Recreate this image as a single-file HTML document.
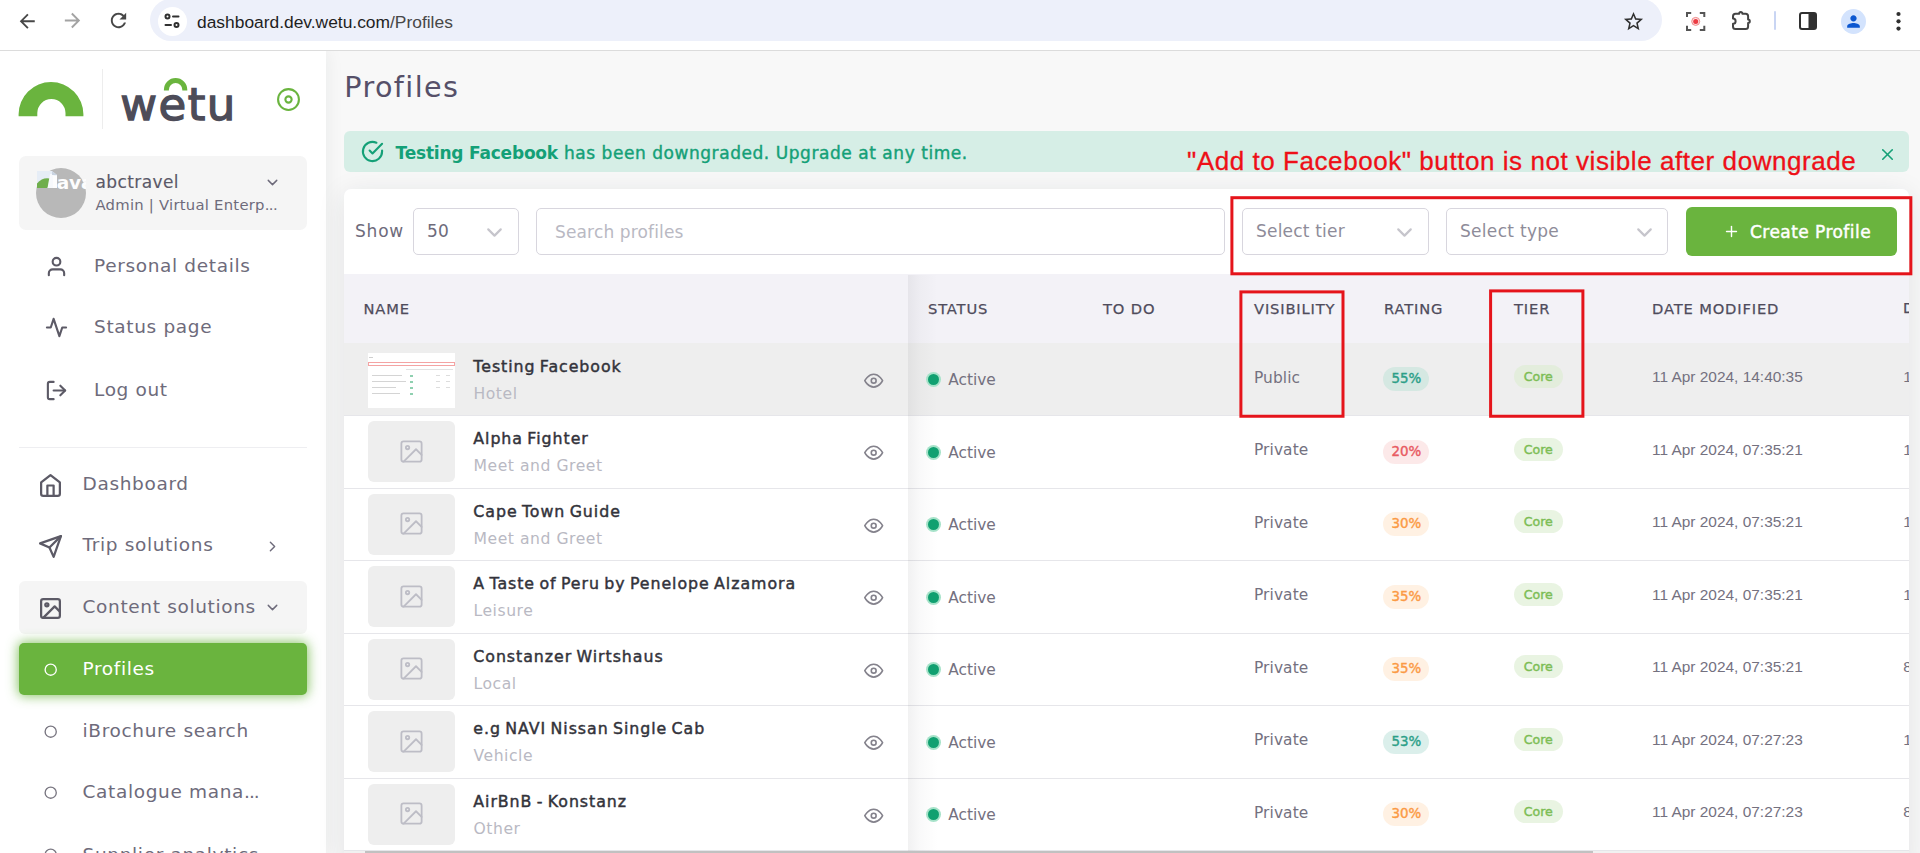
<!DOCTYPE html><html lang="en"><head><meta charset="utf-8"><title>Profiles</title><style>
*{box-sizing:border-box;margin:0;padding:0}
html,body{width:1920px;height:853px;overflow:hidden;background:#f8f8f8}
body{position:relative;font-family:"DejaVu Sans", "Liberation Sans", sans-serif;color:#6e6b7b;font-size:16px}
.a{position:absolute;white-space:nowrap}
svg{position:absolute;overflow:visible}
.fe{fill:none;stroke:currentColor;stroke-width:2;stroke-linecap:round;stroke-linejoin:round}
.t{position:absolute;white-space:nowrap;line-height:1}
/* chrome */
#chrome{left:0;top:0;width:1920px;height:51px;background:#fff;border-bottom:1px solid #dcdcdc}
#pill{left:150px;top:-1px;width:1512px;height:42px;border-radius:21px;background:#edf0fa}
#site{left:158px;top:7px;width:29px;height:29px;border-radius:50%;background:#fff}
#url{left:197px;top:12px;font-family:"Liberation Sans", "DejaVu Sans", sans-serif;font-size:17.4px;color:#1f1f1f;line-height:20px}
#url span{color:#474747}
/* sidebar */
#side{left:0;top:51px;width:326px;height:802px;background:#fff;box-shadow:0 0 18px rgba(34,41,47,.07)}
.nav{font-size:18.5px;letter-spacing:.65px;color:#6e6b7b}
.ico{color:#5c5a66}
#user{left:19px;top:156px;width:288px;height:74px;border-radius:7px;background:#f5f5f5}
#avatar{left:36px;top:168px;width:50px;height:50px;border-radius:50%;background:#b8b8b8}
#act{left:19px;top:643px;width:288px;height:52px;border-radius:5px;background:#6ab43e;box-shadow:0 0 12px 1px rgba(106,180,62,.8)}
#cs{left:19px;top:581px;width:288px;height:53px;border-radius:6px;background:#f5f5f5}
/* main */
#alert{left:344px;top:131px;width:1564.5px;height:40.5px;border-radius:6px;background:#d6eee6}
#card{left:344px;top:188.5px;width:1565px;height:680px;border-radius:7px;background:#fff;box-shadow:0 5px 28px rgba(34,41,47,.1)}
.inp{border:1px solid #d8d6de;border-radius:5px;background:#fff;height:47px;top:208px}
#thead{left:344px;top:274px;width:1565px;height:69px;background:#f3f2f7}
.th{font-size:14.7px;letter-spacing:.85px;color:#4f4c5c;font-weight:400;-webkit-text-stroke:.25px #4f4c5c}
.row{left:344px;width:1565px}
.sep{left:344px;width:1565px;height:1px;background:#e6e6ea}
.thumb{left:368px;width:87px;height:61px;border-radius:6px;background:#eeeeee;color:#b4b4be}
.nm{font-size:15.8px;font-weight:400;color:#33333b;letter-spacing:.95px;word-spacing:-1.6px;-webkit-text-stroke:.45px #33333b}
.ty{font-size:15.6px;color:#b9b9c3;letter-spacing:.55px}
.cell{font-size:15.4px;color:#74717f;letter-spacing:.1px}
.date{font-family:"Liberation Sans", "DejaVu Sans", sans-serif;font-size:15.45px;letter-spacing:0}
.dot{width:11px;height:11px;border-radius:50%;background:#10a070;box-shadow:0 0 0 2px #a6e2c9}
.bd{height:24px;border-radius:12px;font-size:13.4px;font-weight:400;line-height:24px;text-align:center;letter-spacing:-.1px;-webkit-text-stroke:.4px currentColor}
.g{background:rgba(40,160,135,.17);color:#2c9f88}
.r{background:rgba(234,84,85,.13);color:#e85a62}
.o{background:rgba(255,159,67,.15);color:#fb9a45}
.core{background:rgba(106,180,62,.15);color:#7cbd55;height:23px;line-height:23px;width:48.5px;font-size:12.6px;letter-spacing:0}
.red{border:2.5px solid #f0141e}
#anno{left:1187px;top:146px;font-family:"Liberation Sans", "DejaVu Sans", sans-serif;font-size:26px;letter-spacing:.56px;color:#ee0f17;line-height:30px;-webkit-text-stroke:.3px #ee0f17}
</style></head><body>
<div class="a" id="side"></div>
<div class="a" id="chrome"></div>
<div class="a" id="pill"></div><div class="a" id="site"></div>
<div class="a" id="url">dashboard.dev.wetu.com<span>/Profiles</span></div>
<svg style="left:16.25px;top:9.55px;width:22.5px;height:22.5px;fill:#474747" viewBox="0 0 24 24"><path d="M20 11H7.83l5.59-5.59L12 4l-8 8 8 8 1.41-1.41L7.83 13H20v-2z"/></svg>
<svg style="left:61.0px;top:9.0px;width:23px;height:23px;fill:#a3a3a3" viewBox="0 0 24 24"><path d="M12 4l-1.41 1.41L16.17 11H4v2h12.17l-5.58 5.59L12 20l8-8z"/></svg>
<svg style="left:106.5px;top:9.0px;width:23px;height:23px;fill:#474747" viewBox="0 0 24 24"><path d="M17.65 6.35C16.2 4.9 14.21 4 12 4c-4.42 0-7.99 3.58-7.99 8s3.57 8 7.99 8c3.73 0 6.84-2.55 7.73-6h-2.08c-.82 2.33-3.04 4-5.65 4-3.31 0-6-2.69-6-6s2.69-6 6-6c1.66 0 3.14.69 4.22 1.78L13 11h7V4l-2.35 2.35z"/></svg>
<svg style="left:163px;top:12px;width:18px;height:18px" viewBox="0 0 18 18" fill="none" stroke="#303030" stroke-width="2" stroke-linecap="round"><circle cx="4.5" cy="4.5" r="2"/><line x1="10" y1="4.5" x2="15.5" y2="4.5"/><circle cx="13.5" cy="13" r="2"/><line x1="2.5" y1="13" x2="8" y2="13"/></svg>
<svg style="left:1621.5px;top:10.0px;width:23px;height:23px;fill:#303030" viewBox="0 0 24 24"><path d="M22 9.24l-7.19-.62L12 2 9.19 8.63 2 9.24l5.46 4.73L5.82 21 12 17.27 18.18 21l-1.63-7.03L22 9.24zM12 15.4l-3.76 2.27 1-4.28-3.32-2.88 4.38-.38L12 6.1l1.71 4.04 4.38.38-3.32 2.88 1 4.28L12 15.4z"/></svg>
<svg style="left:1685px;top:11px;width:21px;height:21px" viewBox="0 0 21 21" fill="none" stroke="#555" stroke-width="2"><path d="M2 6V2h4.2M14.8 2H19.3v4M19.3 14.8v4.1h-4.5M6.2 18.9H2v-4.1"/><circle cx="10.7" cy="10.4" r="4" fill="#fbe3e3" stroke="#f08a8a" stroke-width="1"/><circle cx="10.7" cy="10.4" r="2.5" fill="#ec3b43" stroke="none"/></svg>
<svg style="left:1729px;top:9px;width:24px;height:24px" viewBox="0 0 24 24" fill="none" stroke="#444" stroke-width="2" stroke-linejoin="round"><path d="M4 7.2 A2.5 2.5 0 0 1 6.5 4.7 H10.2 a1.6 1.6 0 0 1 3.2 0 H16.6 A2.5 2.5 0 0 1 19.1 7.2 V10.5 a1.7 1.7 0 0 1 0 3.4 V17.5 A2.5 2.5 0 0 1 16.6 20 H6.5 A2.5 2.5 0 0 1 4 17.5 V14.8 a2.6 2.6 0 0 0 0 -5.2 Z"/></svg>
<div class="a" style="left:1774px;top:11px;width:2px;height:19px;background:#c9d5f3;border-radius:1px"></div>
<svg style="left:1799px;top:12px;width:18px;height:18px" viewBox="0 0 18 18"><rect x="1" y="1" width="16" height="16" rx="2" fill="none" stroke="#303030" stroke-width="2"/><rect x="9.5" y="1" width="7.5" height="16" fill="#303030"/></svg>
<div class="a" style="left:1841px;top:9px;width:25px;height:25px;border-radius:50%;background:#d3e3fd"></div>
<svg style="left:1844.0px;top:11.5px;width:19px;height:19px;fill:#0b57d0" viewBox="0 0 24 24"><path d="M12 12c2.21 0 4-1.79 4-4s-1.79-4-4-4-4 1.79-4 4 1.79 4 4 4zm0 2c-2.67 0-8 1.34-8 4v2h16v-2c0-2.66-5.33-4-8-4z"/></svg>
<svg style="left:1896px;top:11px;width:5px;height:21px" viewBox="0 0 5 21" fill="#303030"><circle cx="2.5" cy="3" r="2.1"/><circle cx="2.5" cy="10.3" r="2.1"/><circle cx="2.5" cy="17.6" r="2.1"/></svg>
<svg style="left:18px;top:81px;width:66px;height:36px" viewBox="0 0 66 36"><path d="M0.6 35.3 L0.6 33.3 A32.4 32.4 0 0 1 65.4 33.3 L65.4 35.3 L47.5 35.3 L47.5 32.1 A14.1 14.1 0 0 0 19.3 32.1 L19.3 35.3 Z" fill="#6ab43e"/></svg>
<div class="a" style="left:102px;top:69px;width:1px;height:60px;background:#ededed"></div>
<div class="t" id="wetu" style="left:120.2px;top:78.5px;font-size:45px;font-weight:400;color:#4d4c59;line-height:52px;letter-spacing:1.5px;-webkit-text-stroke:1.35px #4d4c59">wetu</div>
<svg style="left:163px;top:77px;width:26px;height:14px" viewBox="0 0 26 14"><path d="M3.4 13.5 L3.4 12.7 A9.2 9.2 0 0 1 21.8 12.7 L21.8 13.5" fill="none" stroke="#6ab43e" stroke-width="5"/></svg>
<svg class="fe" style="left:276.0px;top:87.2px;width:25px;height:25px;color:#6ab43e;stroke-width:2;" viewBox="0 0 24 24" ><circle cx="12" cy="12" r="10"/><circle cx="12" cy="12" r="3"/></svg>
<div class="a" id="user"></div>
<div class="a" id="avatar"></div><svg style="left:36.6px;top:171px;width:20px;height:17px" viewBox="0 0 20 17"><path d="M0 0 H15 L20 4 V17 H0Z" fill="#e6edf6"/><path d="M0 17 V12.5 Q6 5.5 14.5 8 L10.5 17Z" fill="#6fae4c"/><path d="M13 3 h3.5 v14 h-6Z" fill="#f7f9fc"/><path d="M15 0 L20 4 H15Z" fill="#c9d3e0"/><path d="M16 4.5 V17 H20 V4.5Z" fill="#fdfdfd"/></svg><div class="a" style="left:56.8px;top:168px;width:29.4px;height:26px;overflow:hidden"><div class="t" style="left:0;top:4.5px;font-size:18.5px;font-weight:700;color:#fdfdfd;line-height:20px;letter-spacing:-.2px;font-family:"Liberation Sans", "DejaVu Sans", sans-serif">avatar</div></div>
<div class="t " style="left:95.5px;top:170.0px;height:24px;line-height:24px;font-size:17px;letter-spacing:.4px;color:#5b5968;font-weight:400;-webkit-text-stroke:.15px #5b5968">abctravel</div>
<div class="t " style="left:95.5px;top:192.5px;height:24px;line-height:24px;font-size:14.8px;letter-spacing:.25px;color:#6e6b7b">Admin | Virtual Enterp<span style='letter-spacing:-.6px'>...</span></div>
<svg class="fe" style="left:264.0px;top:174.0px;width:17px;height:17px;color:#6e6b7b;" viewBox="0 0 24 24" ><polyline points="6 9 12 15 18 9"/></svg>
<svg class="fe" style="left:45.1px;top:255.0px;width:23px;height:23px;color:#5c5a66;stroke-width:2.2;" viewBox="0 0 24 24" ><path d="M20 21v-2a4 4 0 0 0-4-4H8a4 4 0 0 0-4 4v2"/><circle cx="12" cy="7" r="4"/></svg>
<div class="t nav" style="left:94px;top:254.1px;height:24px;line-height:24px;">Personal details</div>
<svg class="fe" style="left:45.1px;top:316.3px;width:23px;height:23px;color:#5c5a66;stroke-width:2.2;" viewBox="0 0 24 24" ><polyline points="22 12 18 12 15 21 9 3 6 12 2 12"/></svg>
<div class="t nav" style="left:94px;top:315.4px;height:24px;line-height:24px;">Status page</div>
<svg class="fe" style="left:45.1px;top:378.5px;width:23px;height:23px;color:#5c5a66;stroke-width:2.2;" viewBox="0 0 24 24" ><path d="M9 21H5a2 2 0 0 1-2-2V5a2 2 0 0 1 2-2h4"/><polyline points="16 17 21 12 16 7"/><line x1="21" y1="12" x2="9" y2="12"/></svg>
<div class="t nav" style="left:94px;top:377.6px;height:24px;line-height:24px;">Log out</div>
<div class="a" style="left:19px;top:447px;width:288px;height:1px;background:#eeeef1"></div>
<div class="a" id="cs"></div>
<svg class="fe" style="left:38.0px;top:472.9px;width:25px;height:25px;color:#5c5a66;stroke-width:2.15;" viewBox="0 0 24 24" ><path d="M3 9l9-7 9 7v11a2 2 0 0 1-2 2H5a2 2 0 0 1-2-2z"/><polyline points="9 22 9 12 15 12 15 22"/></svg>
<div class="t nav" style="left:82.5px;top:472.1px;height:24px;line-height:24px;">Dashboard</div>
<svg class="fe" style="left:38.0px;top:533.5px;width:25px;height:25px;color:#5c5a66;stroke-width:2.15;" viewBox="0 0 24 24" ><line x1="22" y1="2" x2="11" y2="13"/><polygon points="22 2 15 22 11 13 2 9 22 2"/></svg>
<div class="t nav" style="left:82.5px;top:532.7px;height:24px;line-height:24px;">Trip solutions</div>
<svg class="fe" style="left:38.0px;top:596.1px;width:25px;height:25px;color:#5c5a66;stroke-width:2.15;" viewBox="0 0 24 24" ><rect x="3" y="3" width="18" height="18" rx="2" ry="2"/><circle cx="8.5" cy="8.5" r="1.5"/><polyline points="21 15 16 10 5 21"/></svg>
<div class="t nav" style="left:82.5px;top:595.3px;height:24px;line-height:24px;">Content solutions</div>
<svg class="fe" style="left:263.5px;top:537.5px;width:17px;height:17px;color:#6e6b7b;" viewBox="0 0 24 24" ><polyline points="9 18 15 12 9 6"/></svg>
<svg class="fe" style="left:264.2px;top:599.1px;width:17px;height:17px;color:#6e6b7b;" viewBox="0 0 24 24" ><polyline points="6 9 12 15 18 9"/></svg>
<div class="a" id="act"></div>
<svg class="fe" style="left:43.8px;top:662.5px;width:13.4px;height:13.4px;color:#fff;stroke-width:2.4;" viewBox="0 0 24 24" ><circle cx="12" cy="12" r="10"/></svg>
<div class="t nav" style="left:82.5px;top:656.7px;height:24px;line-height:24px;color:#fff">Profiles</div>
<svg class="fe" style="left:43.8px;top:724.8px;width:13.4px;height:13.4px;color:#77747f;stroke-width:2.4;" viewBox="0 0 24 24" ><circle cx="12" cy="12" r="10"/></svg>
<div class="t nav" style="left:82.5px;top:719.0px;height:24px;line-height:24px;color:#6e6b7b">iBrochure search</div>
<svg class="fe" style="left:43.8px;top:785.8px;width:13.4px;height:13.4px;color:#77747f;stroke-width:2.4;" viewBox="0 0 24 24" ><circle cx="12" cy="12" r="10"/></svg>
<div class="t nav" style="left:82.5px;top:780.0px;height:24px;line-height:24px;color:#6e6b7b">Catalogue mana<span style='letter-spacing:-1px'>...</span></div>
<svg class="fe" style="left:43.8px;top:848.3px;width:13.4px;height:13.4px;color:#77747f;stroke-width:2.4;" viewBox="0 0 24 24" ><circle cx="12" cy="12" r="10"/></svg>
<div class="t nav" style="left:82.5px;top:842.5px;height:24px;line-height:24px;color:#6e6b7b">Supplier analytics</div>
<div class="t " style="left:344.3px;top:68.5px;height:36px;line-height:36px;font-size:28.6px;letter-spacing:1.4px;color:#565069">Profiles</div>
<div class="a" id="alert"></div>
<svg class="fe" style="left:360.8px;top:140.3px;width:23px;height:23px;color:#14a077;stroke-width:2.2;" viewBox="0 0 24 24" ><path d="M22 11.08V12a10 10 0 1 1-5.93-9.14"/><polyline points="22 4 12 14.01 9 11.01"/></svg>
<div class="t " style="left:395.5px;top:140.7px;height:24px;line-height:24px;font-size:17px;color:#14a077;letter-spacing:.55px;-webkit-text-stroke:.4px #14a077"><b style="font-weight:700;letter-spacing:-.2px;-webkit-text-stroke:0">Testing Facebook</b> has been downgraded. Upgrade at any time.</div>
<svg class="fe" style="left:1878.0px;top:144.5px;width:19px;height:19px;color:#14a077;" viewBox="0 0 24 24" ><line x1="18" y1="6" x2="6" y2="18"/><line x1="6" y1="6" x2="18" y2="18"/></svg>
<div class="a" id="card"></div>
<div class="t " style="left:355px;top:219.0px;height:24px;line-height:24px;font-size:17px;letter-spacing:.8px">Show</div>
<div class="a inp" style="left:413px;width:106px"></div>
<div class="t " style="left:427px;top:219.3px;height:24px;line-height:24px;font-size:17px;letter-spacing:.3px">50</div>
<svg class="fe" style="left:481.8px;top:219.5px;width:25px;height:25px;color:#c6c5cc;stroke-width:2.1;" viewBox="0 0 24 24" ><polyline points="6 9 12 15 18 9"/></svg>
<div class="a inp" style="left:536px;width:689px"></div>
<div class="t " style="left:555px;top:220.0px;height:24px;line-height:24px;font-size:17px;letter-spacing:.15px;color:#b9b9c3">Search profiles</div>
<div class="a inp" style="left:1242px;width:187px"></div>
<div class="t " style="left:1256px;top:218.5px;height:24px;line-height:24px;font-size:17px;letter-spacing:.2px;color:#8e8c99">Select tier</div>
<svg class="fe" style="left:1392.2px;top:219.5px;width:25px;height:25px;color:#c6c5cc;stroke-width:2.1;" viewBox="0 0 24 24" ><polyline points="6 9 12 15 18 9"/></svg>
<div class="a inp" style="left:1446px;width:222px"></div>
<div class="t " style="left:1460px;top:218.5px;height:24px;line-height:24px;font-size:17px;letter-spacing:.3px;color:#8e8c99">Select type</div>
<svg class="fe" style="left:1631.5px;top:219.5px;width:25px;height:25px;color:#c6c5cc;stroke-width:2.1;" viewBox="0 0 24 24" ><polyline points="6 9 12 15 18 9"/></svg>
<div class="a" style="left:1686px;top:207px;width:211px;height:49px;border-radius:6px;background:#6ab43e"></div>
<svg class="fe" style="left:1722.5px;top:223.0px;width:17px;height:17px;color:#fff;stroke-width:2;" viewBox="0 0 24 24" ><line x1="12" y1="5" x2="12" y2="19"/><line x1="5" y1="12" x2="19" y2="12"/></svg>
<div class="t " style="left:1750px;top:220.0px;height:24px;line-height:24px;font-size:17px;letter-spacing:.45px;color:#fff;-webkit-text-stroke:.45px #fff">Create Profile</div>
<div class="a" id="thead"></div>
<div class="a row" style="top:343px;height:73px;background:#eeeeee"></div>
<div class="a row" style="top:416px;height:73px;background:#fff"></div>
<div class="a row" style="top:489px;height:72px;background:#fff"></div>
<div class="a row" style="top:561px;height:73px;background:#fff"></div>
<div class="a row" style="top:634px;height:72px;background:#fff"></div>
<div class="a row" style="top:706px;height:73px;background:#fff"></div>
<div class="a row" style="top:779px;height:72px;background:#fff"></div>
<div class="a sep" style="top:415px"></div>
<div class="a sep" style="top:488px"></div>
<div class="a sep" style="top:560px"></div>
<div class="a sep" style="top:633px"></div>
<div class="a sep" style="top:705px"></div>
<div class="a sep" style="top:778px"></div>
<div class="a sep" style="top:850px"></div>
<div class="t cell" style="left:1254px;top:365.8px;height:24px;line-height:24px;">Public</div>
<div class="a bd g" style="left:1383.3px;top:367.0px;width:46px;background:#d5e8e2">55%</div>
<div class="a bd core" style="left:1514px;top:365.0px;background:#e3eddc">Core</div>
<div class="t cell date" style="left:1652px;top:365.0px;height:24px;line-height:24px;">11 Apr 2024, 14:40:35</div>
<div class="a" style="left:1900px;top:365.0px;width:9px;height:24px;overflow:hidden"><div class="t cell date" style="left:3.3px;top:0;height:24px;line-height:24px">11 Apr 2024, 07:27:23</div></div>
<div class="t cell" style="left:1254px;top:438.3px;height:24px;line-height:24px;">Private</div>
<div class="a bd r" style="left:1383.3px;top:439.5px;width:46px">20%</div>
<div class="a bd core" style="left:1514px;top:437.5px">Core</div>
<div class="t cell date" style="left:1652px;top:437.5px;height:24px;line-height:24px;">11 Apr 2024, 07:35:21</div>
<div class="a" style="left:1900px;top:437.5px;width:9px;height:24px;overflow:hidden"><div class="t cell date" style="left:3.3px;top:0;height:24px;line-height:24px">11 Apr 2024, 07:27:23</div></div>
<div class="t cell" style="left:1254px;top:510.8px;height:24px;line-height:24px;">Private</div>
<div class="a bd o" style="left:1383.3px;top:512.0px;width:46px">30%</div>
<div class="a bd core" style="left:1514px;top:510.0px">Core</div>
<div class="t cell date" style="left:1652px;top:510.0px;height:24px;line-height:24px;">11 Apr 2024, 07:35:21</div>
<div class="a" style="left:1900px;top:510.0px;width:9px;height:24px;overflow:hidden"><div class="t cell date" style="left:3.3px;top:0;height:24px;line-height:24px">11 Apr 2024, 07:27:23</div></div>
<div class="t cell" style="left:1254px;top:583.3px;height:24px;line-height:24px;">Private</div>
<div class="a bd o" style="left:1383.3px;top:584.5px;width:46px">35%</div>
<div class="a bd core" style="left:1514px;top:582.5px">Core</div>
<div class="t cell date" style="left:1652px;top:582.5px;height:24px;line-height:24px;">11 Apr 2024, 07:35:21</div>
<div class="a" style="left:1900px;top:582.5px;width:9px;height:24px;overflow:hidden"><div class="t cell date" style="left:3.3px;top:0;height:24px;line-height:24px">11 Apr 2024, 07:27:23</div></div>
<div class="t cell" style="left:1254px;top:655.8px;height:24px;line-height:24px;">Private</div>
<div class="a bd o" style="left:1383.3px;top:657.0px;width:46px">35%</div>
<div class="a bd core" style="left:1514px;top:655.0px">Core</div>
<div class="t cell date" style="left:1652px;top:655.0px;height:24px;line-height:24px;">11 Apr 2024, 07:35:21</div>
<div class="a" style="left:1900px;top:655.0px;width:9px;height:24px;overflow:hidden"><div class="t cell date" style="left:3.3px;top:0;height:24px;line-height:24px">8 Apr 2024, 10:12:45</div></div>
<div class="t cell" style="left:1254px;top:728.3px;height:24px;line-height:24px;">Private</div>
<div class="a bd g" style="left:1383.3px;top:729.5px;width:46px">53%</div>
<div class="a bd core" style="left:1514px;top:727.5px">Core</div>
<div class="t cell date" style="left:1652px;top:727.5px;height:24px;line-height:24px;">11 Apr 2024, 07:27:23</div>
<div class="a" style="left:1900px;top:727.5px;width:9px;height:24px;overflow:hidden"><div class="t cell date" style="left:3.3px;top:0;height:24px;line-height:24px">11 Apr 2024, 07:27:23</div></div>
<div class="t cell" style="left:1254px;top:800.8px;height:24px;line-height:24px;">Private</div>
<div class="a bd o" style="left:1383.3px;top:802.0px;width:46px">30%</div>
<div class="a bd core" style="left:1514px;top:800.0px">Core</div>
<div class="t cell date" style="left:1652px;top:800.0px;height:24px;line-height:24px;">11 Apr 2024, 07:27:23</div>
<div class="a" style="left:1900px;top:800.0px;width:9px;height:24px;overflow:hidden"><div class="t cell date" style="left:3.3px;top:0;height:24px;line-height:24px">8 Apr 2024, 10:12:45</div></div>
<div class="a" style="left:908px;top:275px;width:30px;height:578px;background:linear-gradient(to right,rgba(20,20,30,.06),rgba(20,20,30,.025) 40%,rgba(20,20,30,0))"></div>
<div class="a" style="left:368px;top:353px;width:87px;height:55px;background:#fff;overflow:hidden"><div class="a" style="left:1px;top:4px;width:4px;height:1px;background:#cfcfcf"></div><div class="a" style="left:0;top:9px;width:87px;height:4px;border:1px solid #f4a3a3"></div><div class="a" style="left:38px;top:16px;width:47px;height:1px;background:#e2e2e2"></div><div class="a" style="left:4px;top:22px;width:30px;height:1px;background:#d4d4d4"></div><div class="a" style="left:4px;top:28px;width:34px;height:1px;background:#d4d4d4"></div><div class="a" style="left:4px;top:34px;width:24px;height:1px;background:#d4d4d4"></div><div class="a" style="left:4px;top:40px;width:28px;height:1px;background:#d4d4d4"></div><div class="a" style="left:42px;top:22px;width:3px;height:2px;background:#8fd0b0"></div><div class="a" style="left:42px;top:28px;width:3px;height:2px;background:#8fd0b0"></div><div class="a" style="left:42px;top:34px;width:3px;height:2px;background:#8fd0b0"></div><div class="a" style="left:42px;top:40px;width:3px;height:2px;background:#8fd0b0"></div><div class="a" style="left:68px;top:22px;width:4px;height:1px;background:#ddd"></div><div class="a" style="left:78px;top:22px;width:4px;height:1px;background:#ddd"></div><div class="a" style="left:68px;top:28px;width:4px;height:1px;background:#ddd"></div><div class="a" style="left:78px;top:28px;width:4px;height:1px;background:#ddd"></div><div class="a" style="left:68px;top:34px;width:4px;height:1px;background:#ddd"></div><div class="a" style="left:78px;top:34px;width:4px;height:1px;background:#ddd"></div></div>
<div class="t nm" style="left:473.3px;top:354.8px;height:24px;line-height:24px;">Testing Facebook</div>
<div class="t ty" style="left:473.5px;top:381.8px;height:24px;line-height:24px;">Hotel</div>
<svg class="fe" style="left:864.3px;top:370.9px;width:19.4px;height:19.4px;color:#84828c;stroke-width:2;" viewBox="0 0 24 24" ><path d="M1 12s4-8 11-8 11 8 11 8-4 8-11 8-11-8-11-8z"/><circle cx="12" cy="12" r="3"/></svg>
<div class="a dot" style="left:927.5px;top:374.2px"></div>
<div class="t cell" style="left:948.3px;top:368.2px;height:24px;line-height:24px;letter-spacing:-.05px">Active</div>
<div class="a thumb" style="top:421.2px"></div>
<svg class="fe" style="left:398.0px;top:437.8px;width:27px;height:27px;color:#bdbdc6;stroke-width:1.6;" viewBox="0 0 24 24" ><rect x="3" y="3" width="18" height="18" rx="2" ry="2"/><circle cx="8.5" cy="8.5" r="1.5"/><polyline points="21 15 16 10 5 21"/></svg>
<div class="t nm" style="left:473.3px;top:427.3px;height:24px;line-height:24px;">Alpha Fighter</div>
<div class="t ty" style="left:473.5px;top:454.3px;height:24px;line-height:24px;">Meet and Greet</div>
<svg class="fe" style="left:864.3px;top:443.4px;width:19.4px;height:19.4px;color:#84828c;stroke-width:2;" viewBox="0 0 24 24" ><path d="M1 12s4-8 11-8 11 8 11 8-4 8-11 8-11-8-11-8z"/><circle cx="12" cy="12" r="3"/></svg>
<div class="a dot" style="left:927.5px;top:446.7px"></div>
<div class="t cell" style="left:948.3px;top:440.7px;height:24px;line-height:24px;letter-spacing:-.05px">Active</div>
<div class="a thumb" style="top:493.7px"></div>
<svg class="fe" style="left:398.0px;top:510.3px;width:27px;height:27px;color:#bdbdc6;stroke-width:1.6;" viewBox="0 0 24 24" ><rect x="3" y="3" width="18" height="18" rx="2" ry="2"/><circle cx="8.5" cy="8.5" r="1.5"/><polyline points="21 15 16 10 5 21"/></svg>
<div class="t nm" style="left:473.3px;top:499.8px;height:24px;line-height:24px;">Cape Town Guide</div>
<div class="t ty" style="left:473.5px;top:526.8px;height:24px;line-height:24px;">Meet and Greet</div>
<svg class="fe" style="left:864.3px;top:515.9px;width:19.4px;height:19.4px;color:#84828c;stroke-width:2;" viewBox="0 0 24 24" ><path d="M1 12s4-8 11-8 11 8 11 8-4 8-11 8-11-8-11-8z"/><circle cx="12" cy="12" r="3"/></svg>
<div class="a dot" style="left:927.5px;top:519.2px"></div>
<div class="t cell" style="left:948.3px;top:513.2px;height:24px;line-height:24px;letter-spacing:-.05px">Active</div>
<div class="a thumb" style="top:566.2px"></div>
<svg class="fe" style="left:398.0px;top:582.8px;width:27px;height:27px;color:#bdbdc6;stroke-width:1.6;" viewBox="0 0 24 24" ><rect x="3" y="3" width="18" height="18" rx="2" ry="2"/><circle cx="8.5" cy="8.5" r="1.5"/><polyline points="21 15 16 10 5 21"/></svg>
<div class="t nm" style="left:473.3px;top:572.3px;height:24px;line-height:24px;">A Taste of Peru by Penelope Alzamora</div>
<div class="t ty" style="left:473.5px;top:599.3px;height:24px;line-height:24px;">Leisure</div>
<svg class="fe" style="left:864.3px;top:588.4px;width:19.4px;height:19.4px;color:#84828c;stroke-width:2;" viewBox="0 0 24 24" ><path d="M1 12s4-8 11-8 11 8 11 8-4 8-11 8-11-8-11-8z"/><circle cx="12" cy="12" r="3"/></svg>
<div class="a dot" style="left:927.5px;top:591.7px"></div>
<div class="t cell" style="left:948.3px;top:585.7px;height:24px;line-height:24px;letter-spacing:-.05px">Active</div>
<div class="a thumb" style="top:638.7px"></div>
<svg class="fe" style="left:398.0px;top:655.3px;width:27px;height:27px;color:#bdbdc6;stroke-width:1.6;" viewBox="0 0 24 24" ><rect x="3" y="3" width="18" height="18" rx="2" ry="2"/><circle cx="8.5" cy="8.5" r="1.5"/><polyline points="21 15 16 10 5 21"/></svg>
<div class="t nm" style="left:473.3px;top:644.8px;height:24px;line-height:24px;">Constanzer Wirtshaus</div>
<div class="t ty" style="left:473.5px;top:671.8px;height:24px;line-height:24px;">Local</div>
<svg class="fe" style="left:864.3px;top:660.9px;width:19.4px;height:19.4px;color:#84828c;stroke-width:2;" viewBox="0 0 24 24" ><path d="M1 12s4-8 11-8 11 8 11 8-4 8-11 8-11-8-11-8z"/><circle cx="12" cy="12" r="3"/></svg>
<div class="a dot" style="left:927.5px;top:664.2px"></div>
<div class="t cell" style="left:948.3px;top:658.2px;height:24px;line-height:24px;letter-spacing:-.05px">Active</div>
<div class="a thumb" style="top:711.2px"></div>
<svg class="fe" style="left:398.0px;top:727.8px;width:27px;height:27px;color:#bdbdc6;stroke-width:1.6;" viewBox="0 0 24 24" ><rect x="3" y="3" width="18" height="18" rx="2" ry="2"/><circle cx="8.5" cy="8.5" r="1.5"/><polyline points="21 15 16 10 5 21"/></svg>
<div class="t nm" style="left:473.3px;top:717.3px;height:24px;line-height:24px;">e.g NAVI Nissan Single Cab</div>
<div class="t ty" style="left:473.5px;top:744.3px;height:24px;line-height:24px;">Vehicle</div>
<svg class="fe" style="left:864.3px;top:733.4px;width:19.4px;height:19.4px;color:#84828c;stroke-width:2;" viewBox="0 0 24 24" ><path d="M1 12s4-8 11-8 11 8 11 8-4 8-11 8-11-8-11-8z"/><circle cx="12" cy="12" r="3"/></svg>
<div class="a dot" style="left:927.5px;top:736.7px"></div>
<div class="t cell" style="left:948.3px;top:730.7px;height:24px;line-height:24px;letter-spacing:-.05px">Active</div>
<div class="a thumb" style="top:783.7px"></div>
<svg class="fe" style="left:398.0px;top:800.3px;width:27px;height:27px;color:#bdbdc6;stroke-width:1.6;" viewBox="0 0 24 24" ><rect x="3" y="3" width="18" height="18" rx="2" ry="2"/><circle cx="8.5" cy="8.5" r="1.5"/><polyline points="21 15 16 10 5 21"/></svg>
<div class="t nm" style="left:473.3px;top:789.8px;height:24px;line-height:24px;">AirBnB - Konstanz</div>
<div class="t ty" style="left:473.5px;top:816.8px;height:24px;line-height:24px;">Other</div>
<svg class="fe" style="left:864.3px;top:805.9px;width:19.4px;height:19.4px;color:#84828c;stroke-width:2;" viewBox="0 0 24 24" ><path d="M1 12s4-8 11-8 11 8 11 8-4 8-11 8-11-8-11-8z"/><circle cx="12" cy="12" r="3"/></svg>
<div class="a dot" style="left:927.5px;top:809.2px"></div>
<div class="t cell" style="left:948.3px;top:803.2px;height:24px;line-height:24px;letter-spacing:-.05px">Active</div>
<div class="t th" style="left:363.5px;top:296.5px;height:24px;line-height:24px;">NAME</div>
<div class="t th" style="left:928px;top:296.5px;height:24px;line-height:24px;">STATUS</div>
<div class="t th" style="left:1103px;top:296.5px;height:24px;line-height:24px;">TO DO</div>
<div class="t th" style="left:1254px;top:296.5px;height:24px;line-height:24px;">VISIBILITY</div>
<div class="t th" style="left:1384px;top:296.5px;height:24px;line-height:24px;">RATING</div>
<div class="t th" style="left:1514px;top:296.5px;height:24px;line-height:24px;">TIER</div>
<div class="t th" style="left:1652px;top:296.5px;height:24px;line-height:24px;">DATE MODIFIED</div>
<div class="a" style="left:1900px;top:296px;width:9px;height:24px;overflow:hidden"><div class="t th" style="left:3px;top:0;height:24px;line-height:24px">DATE CREATED</div></div>
<div class="a" style="left:344px;top:851px;width:1565px;height:2px;background:#f1f1f1"></div>
<div class="a" style="left:365px;top:851px;width:1228px;height:2px;background:#c1c1c1"></div>
<svg style="left:0;top:0;width:1920px;height:853px;pointer-events:none" viewBox="0 0 1920 853" fill="none" stroke="#e5141b" stroke-width="3"><rect x="1231.9" y="197.7" width="678.95" height="76.1"/><rect x="1240.9" y="291.9" width="102.1" height="124.35"/><rect x="1490.6" y="290.9" width="92.3" height="125.35"/></svg>
<div class="a" id="anno">"Add to Facebook" button is not visible after downgrade</div>
</body></html>
